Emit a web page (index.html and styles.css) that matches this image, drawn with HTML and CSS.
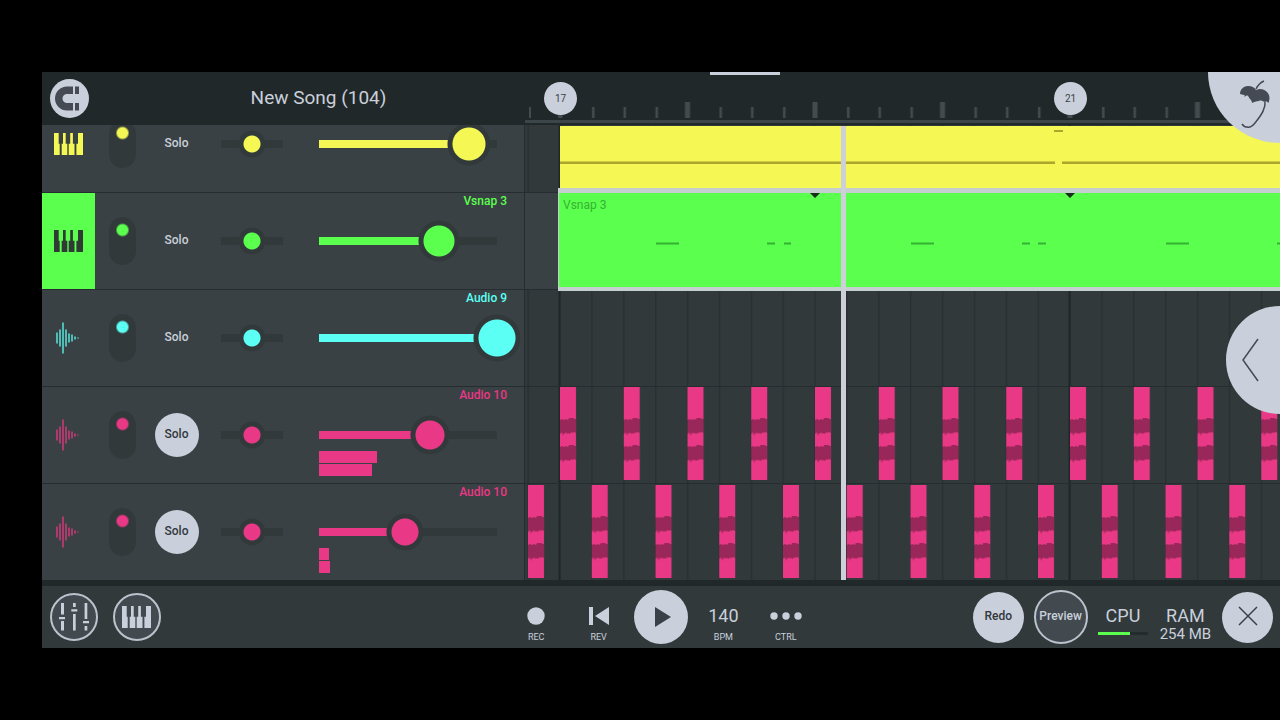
FILE: index.html
```html
<!DOCTYPE html>
<html lang="en">
<head>
<meta charset="utf-8">
<meta name="viewport" content="width=device-width, initial-scale=1">
<title>New Song (104)</title>
<link rel="stylesheet" href="styles.css">
</head>
<body>
<svg class="defs" aria-hidden="true">
  <defs>
    <symbol id="keys" viewBox="0 0 29 22">
      <path d="M0 0h4.700v10.700h1V22H0zM9 0h2.700v10.700h1.600V22H7.700V10.700H9zM16.200 0h2.700v10.700h1.600V22h-5.800V10.700h1.500zM24 0h5v22h-6.600V10.700H24z"/>
    </symbol>
    <symbol id="wave" viewBox="0 0 23 32">
      <path d="M1 10.500v11M4 7.500v17M7 .5v31M10 7.500v17M13 11.500v9M16 12.500v7M19 14.500v3M22 15.500v1" fill="none" stroke="currentColor" stroke-width="1.300"/>
    </symbol>
    <pattern id="beats" x="2.500" y="0" width="31.875" height="455" patternUnits="userSpaceOnUse">
      <rect width="1.500" height="455" fill="#293033"/>
    </pattern>
    <pattern id="bars" x="33.500" y="0" width="510" height="455" patternUnits="userSpaceOnUse">
      <rect width="2" height="455" fill="#1f2628"/>
    </pattern>
    <pattern id="ticks" x="35" y="0" width="127.500" height="53" patternUnits="userSpaceOnUse">
      <path d="M0 30h2.500v16H0zM125 30h2.500v16H125zM32 35h2.500v11H32zM63.500 35h2.500v11h-2.500zM95.500 35h2.500v11h-2.500z" fill="#444b4e"/>
    </pattern>
    <g id="band">
      <path d="M0 2l2-1 2 1 2-1 2 1 1-2h4l2 1h1v14l-2-1-2 1-1-1-1 2-2-1-1 1-1-2-1 2-1-1-1 3-1-4-1 2-1-1z" fill="#9a2759"/>
    </g>
    <g id="clip">
      <rect width="16" height="93" fill="#e93885"/>
      <use href="#band" y="31"/>
      <use href="#band" y="58"/>
    </g>
    <pattern id="clipsA" x="35" y="0" width="63.750" height="97" patternUnits="userSpaceOnUse"><use href="#clip"/></pattern>
    <pattern id="clipsB" x="3" y="0" width="63.750" height="97" patternUnits="userSpaceOnUse"><use href="#clip" y="1"/></pattern>
  </defs>
</svg>

<main class="app">
  <header class="header">
    <div class="song">
      <button class="round magnet" aria-label="Snap">
        <svg width="39" height="39" viewBox="0 0 39 39" fill="#454a54"><path d="M23 7.500h-6a12 12 0 0 0 0 24h6v-7.500h-6a4.500 4.500 0 0 1 0-9h6zM25 7.500h4V15h-4zM25 24h4v7.500h-4z"/></svg>
      </button>
      <h1 class="title">New Song (104)</h1>
    </div>
    <div class="ruler">
      <svg class="fill" aria-hidden="true">
        <rect x="4" y="35" width="2" height="11" fill="#444b4e"/>
        <rect x="33" width="100%" height="53" fill="url(#ticks)"/>
      </svg>
      <span class="handle"></span>
      <button class="marker marker-17">17</button>
      <button class="marker marker-21">21</button>
    </div>
    <button class="logo" aria-label="Menu">
      <svg width="71" height="71" viewBox="0 0 71 71">
        <path d="M56 9q-5 2-8 8M57 30q1 8-10 21-4 5-8 4-3 0-5-3" fill="none" stroke="#454a54" stroke-width="1.500"/>
        <path d="M32 22c0-5 4-8 8-8 4 0 6 1 8 4 4-2 8-1 11 2 3 3 3 7 1.500 11-1-1-2-2-3.500-1-3-1-4-2-6-1-3 0-5 1-7 2 0-2-1-3-2-4-1-1-1-2-2-3-1-1-2 0-4 1 1-1 1-2 0-2z" fill="#454a54"/>
      </svg>
    </button>
  </header>

  <div class="workspace">
    <div class="panel">
      <section class="track yellow first">
        <span class="icon"><svg width="29" height="22"><use href="#keys"/></svg></span>
        <input class="mute" type="checkbox" checked aria-label="Track on">
        <button class="solo">Solo</button>
        <input class="pan" type="range" value="50" aria-label="Pan">
        <div class="mix">
          <input class="volume" type="range" step="any" value="84.300" aria-label="Volume" style="--level:84.3%;--knob:17px">
        </div>
      </section>
      <section class="track green selected">
        <span class="icon"><svg width="29" height="22"><use href="#keys"/></svg></span>
        <input class="mute" type="checkbox" checked aria-label="Track on">
        <button class="solo">Solo</button>
        <input class="pan" type="range" value="50" aria-label="Pan">
        <div class="mix">
          <span class="name">Vsnap 3</span>
          <input class="volume" type="range" step="any" value="67.200" aria-label="Volume" style="--level:67.2%;--knob:16px">
        </div>
      </section>
      <section class="track cyan">
        <span class="icon wave"><svg width="23" height="32"><use href="#wave"/></svg></span>
        <input class="mute" type="checkbox" checked aria-label="Track on">
        <button class="solo">Solo</button>
        <input class="pan" type="range" value="50" aria-label="Pan">
        <div class="mix">
          <span class="name">Audio 9</span>
          <input class="volume" type="range" step="any" value="100" aria-label="Volume" style="--level:100%;--knob:19px">
        </div>
      </section>
      <section class="track pink">
        <span class="icon wave"><svg width="23" height="32"><use href="#wave"/></svg></span>
        <input class="mute" type="checkbox" checked aria-label="Track on">
        <button class="solo on" aria-pressed="true">Solo</button>
        <input class="pan" type="range" value="50" aria-label="Pan">
        <div class="mix">
          <span class="name">Audio 10</span>
          <input class="volume" type="range" step="any" value="62.600" aria-label="Volume" style="--level:62.6%;--knob:15px">
          <div class="meter"><i style="width:58px"></i><i style="width:53px"></i></div>
        </div>
      </section>
      <section class="track pink">
        <span class="icon wave"><svg width="23" height="32"><use href="#wave"/></svg></span>
        <input class="mute" type="checkbox" checked aria-label="Track on">
        <button class="solo on" aria-pressed="true">Solo</button>
        <input class="pan" type="range" value="50" aria-label="Pan">
        <div class="mix">
          <span class="name">Audio 10</span>
          <input class="volume" type="range" step="any" value="48.400" aria-label="Volume" style="--level:48.4%;--knob:14px">
          <div class="meter"><i style="width:10px"></i><i style="width:11px"></i></div>
        </div>
      </section>
    </div>

    <div class="timeline">
      <svg class="fill" aria-hidden="true">
        <rect width="100%" height="100%" fill="url(#beats)"/>
        <rect width="100%" height="100%" fill="url(#bars)"/>
      </svg>
      <div class="lane first-lane">
        <svg class="pattern pattern-yellow" aria-hidden="true">
          <g fill="#aca62c"><rect y="35.500" width="495" height="2.500"/><rect x="494" y="4" width="9" height="2"/><rect x="502" y="35.500" width="100%" height="2.500"/></g>
        </svg>
      </div>
      <div class="lane selected-lane">
        <div class="pattern pattern-green">
          <span class="pattern-name">Vsnap 3</span>
          <svg class="fill" aria-hidden="true">
            <path d="M251 0h10l-5 5zM506 0h10l-5 5z" fill="#16301a"/>
            <path d="M97 50.500h23M208 50.500h8M225 50.500h7M352 50.500h23M463 50.500h8M479 50.500h8M607 50.500h23M718 50.500h8" stroke="#35b233" stroke-width="2"/>
          </svg>
        </div>
      </div>
      <div class="lane"></div>
      <div class="lane"><svg class="fill" aria-hidden="true"><rect width="100%" height="100%" fill="url(#clipsA)"/></svg></div>
      <div class="lane"><svg class="fill" aria-hidden="true"><rect x="3" width="100%" height="100%" fill="url(#clipsB)"/></svg></div>
      <span class="playhead"></span>
      <button class="drawer" aria-label="Open side panel">
        <svg width="54" height="108" viewBox="0 0 54 108"><path d="M32 33L17 54l15 21" fill="none" stroke="#454a54" stroke-width="1.500"/></svg>
      </button>
    </div>
  </div>

  <footer class="footer">
    <div class="group views">
      <button class="round ring" aria-label="Mixer">
        <svg width="30" height="28" viewBox="0 0 30 28" fill="#c9d0db"><path d="M2 0h3v11.500H2zM0 14h6v2.300H0zM2 18h3v9.500H2zM14 0h2.700v4H14zM12.300 6.200h6v2.300h-6zM14 11h2.700v16.500H14zM25.600 0h2.700v16h-2.700zM24 18h6v2.300h-6zM25.600 23h2.700v4.500h-2.700z"/></svg>
      </button>
      <button class="round ring" aria-label="Keyboard"><svg class="keys" width="29" height="22"><use href="#keys"/></svg></button>
    </div>
    <div class="group transport">
      <button class="item"><span class="glyph"><svg width="18" height="18"><circle cx="9" cy="9" r="8.700"/></svg></span><span class="caption">REC</span></button>
      <button class="item"><span class="glyph"><svg width="20" height="18"><path d="M0 0h4v18H0zM6 9L20 0v18z"/></svg></span><span class="caption">REV</span></button>
      <button class="round play" aria-label="Play"><svg width="54" height="54"><path d="M21 17v20l16-10z" fill="#3b4048"/></svg></button>
      <button class="item"><span class="glyph number">140</span><span class="caption">BPM</span></button>
      <button class="item"><span class="glyph"><svg width="32" height="8"><circle cx="4" cy="4" r="3.700"/><circle cx="16" cy="4" r="3.700"/><circle cx="28" cy="4" r="3.700"/></svg></span><span class="caption">CTRL</span></button>
    </div>
    <div class="group status">
      <button class="round solid">Redo</button>
      <button class="round ring preview">Preview</button>
      <div class="stat"><span class="number">CPU</span><span class="load"><i style="width:64%"></i></span></div>
      <div class="stat"><span class="number">RAM</span><span class="memory">254 MB</span></div>
      <button class="round solid" aria-label="Close"><svg width="20" height="20"><path d="M1 1l18 18M19 1L1 19" stroke="#3b4048" stroke-width="1.500"/></svg></button>
    </div>
  </footer>
</main>
</body>
</html>
```

FILE: styles.css
```css
* { box-sizing: border-box; }

:root {
  --light: #c9d0db;
  --groove: #32393b;
  --panel: #3a4144;
  --line: #262d30;
  --track-height: 97px;
  --panel-width: 482px;
}

body {
  margin: 0;
  min-height: 100vh;
  padding: 72px 0 72px 42px;
  background: #000;
  color: var(--light);
  font-family: Roboto, "Liberation Sans", sans-serif;
  overflow-x: hidden;
}

button {
  padding: 0;
  border: 0;
  background: none;
  color: inherit;
  font: inherit;
}

svg { display: block; }
.defs { position: absolute; width: 0; height: 0; }

.fill {
  position: absolute;
  inset: 0;
  width: 100%;
  height: 100%;
}

.app {
  display: flex;
  flex-direction: column;
  background: #212829;
}

.round {
  display: grid;
  place-items: center;
  border-radius: 50%;
  background: var(--light);
}

/* Header */
.header {
  position: relative;
  z-index: 2;
  display: flex;
  height: 53px;
}

.song {
  display: flex;
  align-items: center;
  width: var(--panel-width);
  padding-left: 8px;
}

.magnet { width: 39px; height: 39px; }

.title {
  flex: 1;
  margin: 0;
  padding: 0 0 2px 24px;
  font-size: 19px;
  font-weight: 400;
  text-align: center;
}

.ruler {
  position: relative;
  flex: 1;
  margin-left: 1px;
}

.ruler::after {
  content: "";
  position: absolute;
  inset: auto 0 2px;
  height: 3px;
  background: #3c4548;
}

.handle {
  position: absolute;
  left: 185px;
  top: 0;
  width: 70px;
  height: 3px;
  background: var(--light);
}

.marker {
  position: absolute;
  top: 10px;
  z-index: 1;
  width: 33px;
  height: 33px;
  border-radius: 50%;
  background: var(--light);
  color: #3b4048;
  font-size: 10px;
}

.marker-17 { left: 19px; }
.marker-21 { left: 529px; }

.logo {
  position: absolute;
  top: 0;
  right: 0;
  z-index: 1;
  width: 72px;
  height: 71px;
  border-radius: 0 0 0 100%;
  background: var(--light);
}

/* Track controls */
.workspace { display: flex; }

.panel {
  width: var(--panel-width);
  overflow: hidden;
  background: var(--panel);
}

.track {
  display: grid;
  grid-template-columns: 53px 54px 55px 96px minmax(0, 1fr);
  align-items: center;
  justify-items: center;
  height: var(--track-height);
  border-bottom: 1px solid var(--line);
}

.track.first { margin-top: -29px; }
.track:last-child { height: 96px; border-bottom: 0; }

.yellow { --color: #f4f754; }
.green { --color: #5bff4e; }
.cyan { --color: #5bfff3; }
.pink { --color: #e93885; }

.icon {
  display: grid;
  place-items: center;
  width: 100%;
  height: 100%;
  color: var(--color);
  fill: currentColor;
}

.icon.wave { padding-right: 2px; }

.selected .icon {
  background: var(--color);
  color: #303a35;
}

.mute {
  appearance: none;
  width: 27px;
  height: 48px;
  margin: 0;
  border-radius: 14px;
  background: radial-gradient(circle at 50% 13px, var(--color) 5px, var(--groove) 7px);
}

.solo {
  width: 44px;
  height: 44px;
  padding-bottom: 2px;
  border-radius: 50%;
  font-size: 12px;
  font-weight: 500;
}

.solo.on {
  background: var(--light);
  color: #32373d;
}

.pan,
.volume {
  appearance: none;
  height: 16px;
  margin: 0;
  background: none;
}

.pan {
  --knob: 9px;
  width: 62px;
  background: linear-gradient(var(--groove), var(--groove)) center / 100% 8px no-repeat;
}

/* The range is a knob wider than its groove, so the knob centre reaches both ends. */
.volume {
  grid-row: 2;
  width: 226px;
  margin-left: -24px;
  background:
    linear-gradient(90deg, var(--color) var(--level), var(--groove) var(--level))
    center / 178px 8px no-repeat;
}

.pan::-webkit-slider-thumb,
.volume::-webkit-slider-thumb {
  appearance: none;
  width: 48px;
  height: 48px;
  background: radial-gradient(circle,
    var(--color) calc(var(--knob) - 1px),
    var(--groove) var(--knob),
    var(--groove) calc(var(--knob) + 4px),
    transparent calc(var(--knob) + 5px));
}

.mix {
  display: grid;
  grid-template-rows: 40px 16px 40px;
  grid-template-columns: minmax(0, 1fr);
  justify-self: stretch;
  padding: 0 17px 0 19px;
}

.name {
  padding-top: 1px;
  color: var(--color);
  font-size: 12px;
  font-weight: 500;
  line-height: 14px;
  text-align: right;
}

.meter {
  display: flex;
  flex-direction: column;
  gap: 1px;
  padding-top: 8px;
}

.meter i {
  height: 12px;
  background: var(--color);
}

/* Timeline */
.timeline {
  position: relative;
  flex: 1;
  min-width: 0;
  overflow: hidden;
  border-left: 1px solid var(--line);
  background: #31393b;
}

.lane {
  position: relative;
  height: var(--track-height);
  border-bottom: 1px solid var(--line);
}

.first-lane { height: 68px; padding: 1px 0 0 35px; }
.lane:nth-of-type(5) { height: 96px; border-bottom: 0; }

.selected-lane {
  z-index: 1;
  padding-left: 33px;
  background: linear-gradient(90deg, var(--panel) 33px, transparent 33px);
}

.pattern { display: block; width: 100%; }
.pattern-yellow { height: 66px; background: #f4f754; }

.pattern-green {
  position: relative;
  flex: none;
  height: 103px;
  margin-top: -5px;
  border: solid #c6cfd0;
  border-width: 5px 0 4px 1px;
  background: #5bff4e;
}

.selected-lane { display: flex; }

.pattern-name {
  display: block;
  padding: 4px 4px 0;
  color: #35b233;
  font-size: 12px;
  line-height: 17px;
}

.playhead {
  position: absolute;
  top: 1px;
  bottom: 0;
  left: 316px;
  z-index: 2;
  width: 5px;
  background: #cdd0d8;
}

.drawer {
  position: absolute;
  top: 181px;
  right: 0;
  z-index: 2;
  width: 54px;
  height: 108px;
  border-radius: 54px 0 0 54px;
  background: var(--light);
}

/* Footer */
.footer {
  display: flex;
  height: 68px;
  border-top: 6px solid #212829;
  background: #31393b;
}

.group {
  display: grid;
  grid-template-columns: repeat(5, 1fr);
  place-items: center;
  width: 312px;
}

.views {
  grid-template-columns: repeat(2, 1fr);
  width: 126px;
}

.transport { margin-left: 337px; }
.status { margin: 0 1px 0 auto; }

.ring {
  width: 48px;
  height: 48px;
  border: 2px solid #bcc3cd;
  background: #424a50;
}

.keys, .glyph { fill: var(--light); }

.solid,
.preview {
  padding-bottom: 2px;
  font-size: 12px;
  font-weight: 500;
}

.solid { width: 51px; height: 51px; color: #32373d; }
.preview { width: 54px; height: 54px; }
.play { width: 54px; height: 54px; }

.item,
.stat {
  display: flex;
  flex-direction: column;
  align-items: center;
}

.item { padding-top: 14px; }

.glyph {
  display: grid;
  place-items: center;
  height: 20px;
}

.number { font-size: 18px; line-height: 20px; }

.caption {
  margin-top: 5px;
  font-size: 9px;
  line-height: 12px;
}

.stat {
  height: 100%;
  padding-top: 20px;
}

.memory { font-size: 15px; line-height: 16px; }

.load {
  width: 50px;
  height: 3px;
  margin-top: 6px;
  background: #242b2d;
}

.load i {
  display: block;
  height: 100%;
  background: #5bff4e;
}
```
